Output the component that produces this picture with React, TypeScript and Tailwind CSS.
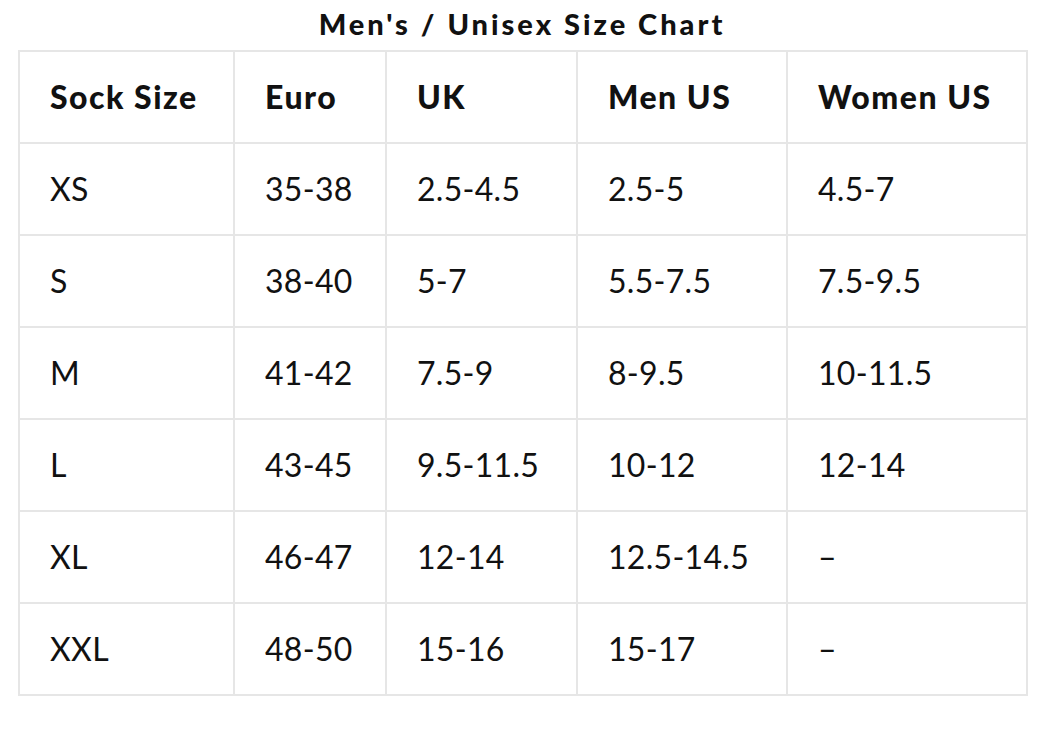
const HEAD = ["Sock Size", "Euro", "UK", "Men US", "Women US"];

const ROWS = [
  ["XS", "35-38", "2.5-4.5", "2.5-5", "4.5-7"],
  ["S", "38-40", "5-7", "5.5-7.5", "7.5-9.5"],
  ["M", "41-42", "7.5-9", "8-9.5", "10-11.5"],
  ["L", "43-45", "9.5-11.5", "10-12", "12-14"],
  ["XL", "46-47", "12-14", "12.5-14.5", "–"],
  ["XXL", "48-50", "15-16", "15-17", "–"],
];

const WIDTHS = ["w-[215px]", "w-[152px]", "w-[191px]", "w-[210px]", "w-[240px]"];

export default function App() {
  return (
    <div className="min-h-screen bg-white px-[18px] pt-[6px] text-[#111] [font-family:Lato,'Noto_Sans',sans-serif]">
      <div className="w-[1008px]">
        <h1 className="text-center text-[29px] font-black leading-[36px] tracking-[3px]">Men's / Unisex Size Chart</h1>
        <table className="mt-[8px] w-full table-fixed border-collapse border-2 border-[#e6e6e6]">
          <thead>
            <tr className="h-[92px]">
              {HEAD.map((h, i) => (
                <th key={h} className={`${WIDTHS[i]} border-2 border-[#e6e6e6] pl-[30px] text-left text-[32px] font-black tracking-[1.5px]`}>
                  {h}
                </th>
              ))}
            </tr>
          </thead>
          <tbody>
            {ROWS.map((row) => (
              <tr key={row[0]} className="h-[92px]">
                {row.map((c, i) => (
                  <td key={i} className="border-2 border-[#e6e6e6] pl-[30px] text-left text-[32px] tracking-[0.3px]">
                    {c}
                  </td>
                ))}
              </tr>
            ))}
          </tbody>
        </table>
      </div>
    </div>
  );
}
